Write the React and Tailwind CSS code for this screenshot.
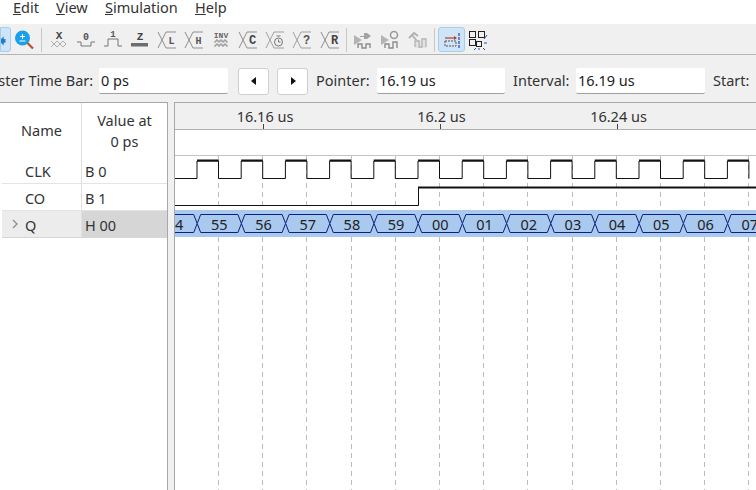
import React from "react";

const NOTO = { fontFamily: '"Noto Sans", sans-serif' };
const LINE = "#8f8f8f";
const MUTED = "#b4b4b4";

const GRID = Array.from({ length: 13 }, (_, i) => 218.5 + i * 44.2);
const BUS = ["54", "55", "56", "57", "58", "59", "00", "01", "02", "03", "04", "05", "06", "07"];

// X shape used by most of the "force value" buttons
function Cross({ color = LINE }) {
  return <path d="M1 2 L5 10 L1 18 M9 2 L5 10 L9 18 M9 2 H19 M9 18 H19" fill="none" stroke={color} strokeWidth="1" />;
}

function ToolIcon({ children, className = "" }) {
  return (
    <svg width="20" height="20" viewBox="0 0 20 20" className={`shrink-0 ${className}`}>
      {children}
    </svg>
  );
}

function Letter({ x = 14.5, y = 13.5, size = 10, fill = "#555", weight = 700, children }) {
  return (
    <text x={x} y={y} fontSize={size} fontWeight={weight} fill={fill} textAnchor="middle" fontFamily='"Liberation Mono", monospace'>
      {children}
    </text>
  );
}

function Separator() {
  return <div className="w-px h-[24px] bg-[#c8c8c8] shrink-0" />;
}

function Toolbar() {
  return (
    <div className="h-[30px] bg-[#f0f0f0] border-b border-[#b5b5b5] flex items-center shrink-0 overflow-hidden">
      <div className="w-[11px] h-[25px] bg-[#cfe4f7] border border-[#a5cdf0] rounded-r-[3px] shrink-0 flex items-center overflow-hidden">
        <svg width="10" height="14" viewBox="0 0 10 14"><path d="M-2 8 L3 3 V6 H5 V10 H3 V13 Z" fill="#1c7fd0" /></svg>
      </div>
      <ToolIcon className="ml-[3px]">
        <circle cx="8.5" cy="8" r="7.5" fill="#18a0ea" />
        <path d="M8.5 4 V9 M6 6.5 H11 M5.5 11 H11.5" stroke="#fff" strokeWidth="1" fill="none" />
        <path d="M13.5 13 L19 18.5" stroke="#b9532a" strokeWidth="2.2" />
      </ToolIcon>
      <div className="ml-[7px]"><Separator /></div>
      <div className="flex items-center gap-[7px] ml-[7px]">
        <ToolIcon>
          <Letter x={10} y={9} size={11} fill="#444">X</Letter>
          <path d="M2 11 L5 14 L8 11 L11 14 L14 11 L17 14 M2 17 L5 14 L8 17 L11 14 L14 17 L17 14" stroke={LINE} strokeWidth="0.7" fill="none" />
        </ToolIcon>
        <ToolIcon>
          <Letter x={10} y={10} size={10}>0</Letter>
          <path d="M1 12 H5 V16 H15 V12 H19" stroke="#777" strokeWidth="1" fill="none" />
        </ToolIcon>
        <ToolIcon>
          <Letter x={10} y={7} size={9}>1</Letter>
          <path d="M1 16 H5 V9 H15 V16 H19" stroke="#777" strokeWidth="1" fill="none" />
        </ToolIcon>
        <ToolIcon>
          <Letter x={10} y={10} size={11} fill="#444">Z</Letter>
          <rect x="1" y="13" width="17" height="3.5" fill="#6e6e6e" />
        </ToolIcon>
        <ToolIcon><Cross /><Letter>L</Letter></ToolIcon>
        <ToolIcon><Cross /><Letter>H</Letter></ToolIcon>
        <ToolIcon>
          <Letter x={10} y={8} size={8} fill="#666">INV</Letter>
          <path d="M3 12 H5 V10 H7 V12 H9 V10 H11 V12 H13 V10 H15 V12 H17 M3 16 H5 V14 H7 V16 H9 V14 H11 V16 H13 V14 H15 V16 H17" stroke="#777" strokeWidth="0.8" fill="none" />
        </ToolIcon>
        <ToolIcon><Cross /><Letter size={12} fill="#444">C</Letter></ToolIcon>
        <ToolIcon>
          <Cross color="#a0a0a0" />
          <circle cx="13.5" cy="12" r="4" fill="none" stroke="#777" />
          <path d="M13.5 9.5 V12 H15.5 M11.5 6 H15.5" stroke="#777" fill="none" />
        </ToolIcon>
        <ToolIcon><Cross color="#a0a0a0" /><Letter size={12}>?</Letter></ToolIcon>
        <ToolIcon className="ml-[1px]"><Cross /><Letter size={12} fill="#444">R</Letter></ToolIcon>
      </div>
      <div className="ml-[6px]"><Separator /></div>
      <div className="flex items-center gap-[7px] ml-[6px]">
        <ToolIcon>
          <path d="M1 5 L9 10 L1 15 Z" fill={MUTED} />
          <path d="M7 6 H11 V3 H14 L18 6 L14 9 H11 V7 H7 Z" fill="#a2a2a2" />
          <path d="M5 18 V14 H9 V18 H13 V14 H17 V18" fill="none" stroke="#8c8c8c" strokeWidth="1.4" />
        </ToolIcon>
        <ToolIcon>
          <path d="M1 5 L9 10 L1 15 Z" fill={MUTED} />
          <circle cx="14" cy="5" r="3.5" fill="none" stroke="#9a9a9a" strokeWidth="1.6" />
          <path d="M5 18 V14 H9 V18 H13 V12 H17 V18" fill="none" stroke="#8c8c8c" strokeWidth="1.4" />
        </ToolIcon>
        <ToolIcon>
          <path d="M2 8 L7 3 L11 6 M5 5 L10 11" fill="none" stroke="#b0b0b0" strokeWidth="1.8" />
          <rect x="8" y="10" width="11" height="8" fill="#e2e2e2" />
          <path d="M8 17 V11 H12 V17 H15 V9 H19 V17" fill="none" stroke={MUTED} strokeWidth="1.3" />
        </ToolIcon>
      </div>
      <div className="ml-[7px]"><Separator /></div>
      <div className="ml-[3px] w-[27px] h-[25px] bg-[#cfe4f7] border border-[#a5cdf0] rounded-[3px] flex items-center justify-center shrink-0">
        <ToolIcon>
          <path d="M3 8 H14" stroke="#c0392b" strokeWidth="1.2" />
          <path d="M12 6 L15 8 L12 10 Z" fill="#c0392b" />
          <rect x="3" y="11" width="11" height="5" fill="none" stroke="#555" strokeWidth="1" strokeDasharray="2 1" />
          <path d="M17 3 V19" stroke="#1f4fa8" strokeWidth="1.2" strokeDasharray="3 1" />
        </ToolIcon>
      </div>
      <ToolIcon className="ml-[3px]">
        <rect x="1.5" y="1.5" width="6" height="6" fill="none" stroke="#222" />
        <rect x="10.5" y="1.5" width="6" height="6" fill="none" stroke="#222" />
        <rect x="1.5" y="9.5" width="6" height="6" fill="none" stroke="#222" />
        <rect x="8.5" y="11.5" width="5" height="5" fill="none" stroke="#222" />
        <path d="M19 5 L16 9 M16 13 H19 M15 18 L17 20 M8 18 L6 20 M11 18 V20" stroke="#1f4fa8" fill="none" />
      </ToolIcon>
    </div>
  );
}

function Field({ value, width }) {
  return (
    <div className={`${width} h-[26px] bg-white rounded-[2px] border-b border-[#a0a0a0] flex items-center pl-[2px] text-[14.5px] text-[#222] shrink-0`}>
      {value}
    </div>
  );
}

function StepButton({ dir }) {
  return (
    <div className="w-[31px] h-[27px] bg-white border border-[#cfcfcf] rounded-[3px] flex items-center justify-center shrink-0">
      <svg width="6" height="8" viewBox="0 0 6 8">
        <path d={dir === "left" ? "M5 0 V8 L0 4 Z" : "M1 0 V8 L6 4 Z"} fill="#111" />
      </svg>
    </div>
  );
}

function TimeBar() {
  return (
    <div className="h-[47px] pt-[5px] bg-[#f0f0f0] flex items-center text-[14.5px] text-[#333] shrink-0 whitespace-nowrap">
      <span className="ml-[-23px] w-[115px] shrink-0">Master Time Bar:</span>
      <div className="ml-[7px]"><Field value="0 ps" width="w-[129px]" /></div>
      <div className="ml-[10px]"><StepButton dir="left" /></div>
      <div className="ml-[8px]"><StepButton dir="right" /></div>
      <span className="ml-[8px] w-[54px] shrink-0">Pointer:</span>
      <div className="ml-[7px]"><Field value="16.19 us" width="w-[128px]" /></div>
      <span className="ml-[8px] w-[56px] shrink-0">Interval:</span>
      <div className="ml-[7px]"><Field value="16.19 us" width="w-[129px]" /></div>
      <span className="ml-[8px] shrink-0">Start:</span>
    </div>
  );
}

function SignalRow({ name, value, selected }) {
  return (
    <div className={`grid grid-cols-[80px_1fr] h-[27px] text-[14.5px] text-[#333] border-b ${selected ? "border-[#d6d6d6]" : "border-[#e4e4e4]"}`}>
      <div className={`flex items-center pt-[3px] pl-[23px] relative border-r border-[#e0e0e0] ${selected ? "bg-[#ececec]" : "bg-white"}`}>
        {selected && (
          <svg width="6" height="10" viewBox="0 0 6 10" className="absolute left-[10px] top-[8px]">
            <path d="M1 1 L5 5 L1 9" fill="none" stroke="#888" strokeWidth="1.2" />
          </svg>
        )}
        {name}
      </div>
      <div className={`flex items-center pt-[3px] pl-[3px] ${selected ? "bg-[#d6d6d6]" : "bg-white"}`}>{value}</div>
    </div>
  );
}

function NamePanel() {
  return (
    <div className="w-[168px] shrink-0 bg-white border-t border-r border-[#a8a8a8] pl-[2px]">
      <div className="grid grid-cols-[80px_1fr] h-[54px] text-[14.5px] text-[#333]">
        <div className="flex items-center justify-center pt-[2px] border-r border-[#e0e0e0]">Name</div>
        <div className="flex flex-col items-center justify-center pt-[1px] leading-[21px]">
          <span>Value at</span>
          <span>0 ps</span>
        </div>
      </div>
      <SignalRow name="CLK" value="B 0" />
      <SignalRow name="CO" value="B 1" />
      <SignalRow name="Q" value="H 00" selected />
    </div>
  );
}

function WavePanel() {
  const clockPath = [];
  // clock starts low at the panel edge, first rising edge at 197
  let clk = "M174 178.5";
  for (let i = 0; i < 13; i++) {
    const up = 197 + i * 44.2;
    const down = up + 21.5;
    clk += ` H${up} V161 H${down} V178.5`;
    clockPath.push(up);
  }

  return (
    <div className="flex-1 min-w-0 ml-[6px] bg-white border-t border-l border-[#a8a8a8] relative overflow-hidden">
      <svg width="581" height="387" viewBox="175 103 581 387" className="block">
        <rect x="175" y="103" width="581" height="26" fill="#f0f0f0" />
        <path d="M175 129.5 H756" stroke="#b0b0b0" />
        <path d="M175 155.5 H756" stroke="#c4c4c4" />
        {[263, 440, 617].map((x) => (
          <path key={x} d={`M${x + 0.5} 124 V129`} stroke="#444" />
        ))}
        {[["16.16 us", 265], ["16.2 us", 441.5], ["16.24 us", 618.5]].map(([label, x]) => (
          <text key={label} x={x} y="122" fontSize="14.5" textAnchor="middle" fill="#333" style={NOTO}>{label}</text>
        ))}
        {GRID.map((x) => (
          <path key={x} d={`M${Math.floor(x) + 0.5} 156 V490`} stroke="#bdbdbd" strokeDasharray="5 4" />
        ))}
        <path d={clk} fill="none" stroke="#111" strokeWidth="1" />
        {clockPath.map((x) => (
          <path key={x} d={`M${x} 160.5 H${x + 21.5}`} stroke="#111" strokeWidth="2" />
        ))}
        <path d="M175 205.5 H418.5 V187.5" fill="none" stroke="#111" strokeWidth="1" />
        <path d="M418 187.5 H756" stroke="#111" strokeWidth="2" />
        <rect x="175" y="210" width="581" height="27" fill="#a9c9ef" />
        {BUS.map((label, i) => {
          const l = 153 + i * 44.2;
          const r = l + 44.2;
          return (
            <g key={i}>
              <path d={`M${l} 223.5 L${l + 3.5} 214.5 H${r - 3.5} L${r} 223.5 L${r - 3.5} 232.5 H${l + 3.5} Z`} fill="#a9c9ef" stroke="#0d1f7a" strokeWidth="1" />
              <text x={(l + r) / 2} y="230" fontSize="14.5" textAnchor="middle" fill="#222" style={NOTO}>{label}</text>
            </g>
          );
        })}
      </svg>
    </div>
  );
}

export default function App() {
  return (
    <div className="w-[756px] h-[490px] bg-white overflow-hidden flex flex-col" style={NOTO}>
      <div className="h-[25px] bg-white flex items-start text-[14.5px] text-[#333] shrink-0 pl-[13px] leading-[15px] border-b border-[#f0f0f0]">
        <span className="w-[43px]"><u>E</u>dit</span>
        <span className="w-[49px]"><u>V</u>iew</span>
        <span className="w-[90px]"><u>S</u>imulation</span>
        <span><u>H</u>elp</span>
      </div>
      <Toolbar />
      <TimeBar />
      <div className="flex-1 min-h-0 flex bg-[#f0f0f0]">
        <NamePanel />
        <WavePanel />
      </div>
    </div>
  );
}
